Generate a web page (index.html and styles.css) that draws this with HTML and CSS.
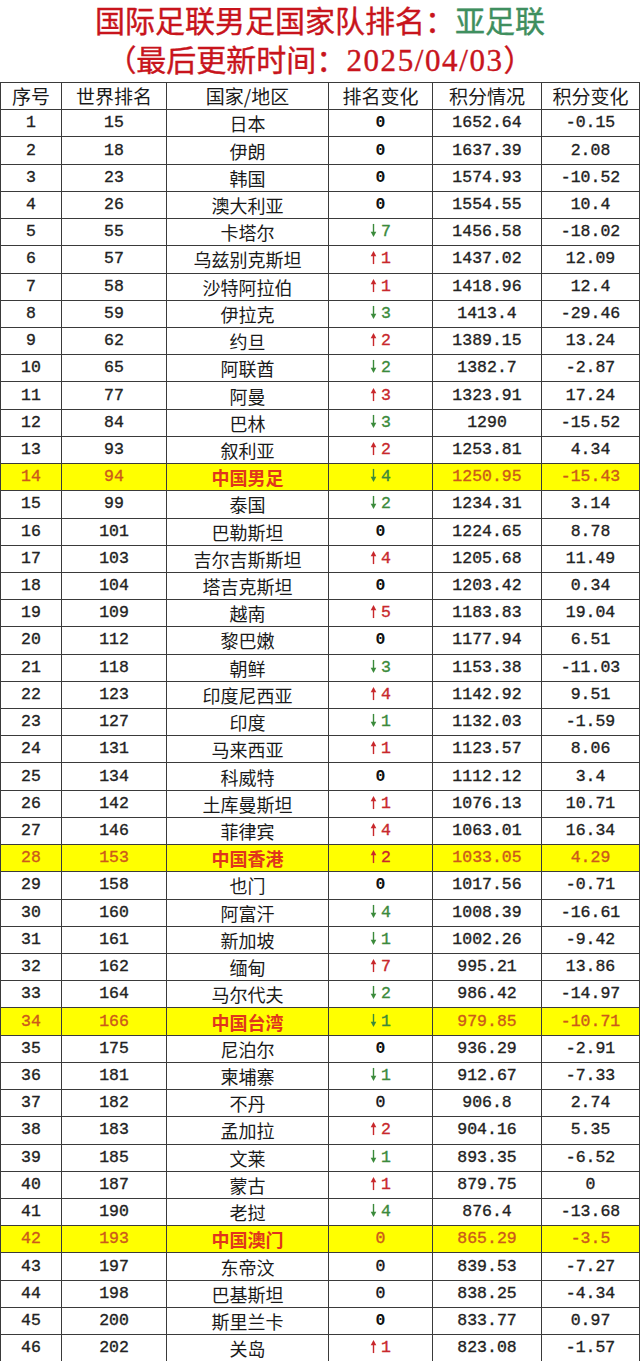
FILE: index.html
```html
<!DOCTYPE html>
<html lang="zh-CN">
<head>
<meta charset="utf-8">
<title>国际足联男足国家队排名：亚足联</title>
<link rel="stylesheet" href="styles.css">
</head>
<body>
<header class="title">
  <div class="title-line1"><span class="red">国际足联男足国家队排名：</span><span class="green">亚足联</span></div>
  <div class="title-line2">（最后更新时间：<span class="date">2025/04/03</span>）</div>
</header>
<svg width="0" height="0" class="defs" aria-hidden="true">
  <defs>
    <symbol id="up" viewBox="0 0 8 16"><path d="M4 15.5V5" stroke="currentColor" stroke-width="1.6" fill="none"/><path d="M4 0.5L0.8 6.5H7.2Z" fill="currentColor"/></symbol>
    <symbol id="down" viewBox="0 0 8 16"><path d="M4 0.5V11" stroke="currentColor" stroke-width="1.6" fill="none"/><path d="M4 15.5L0.8 9.5H7.2Z" fill="currentColor"/></symbol>
  </defs>
</svg>
<table class="rank">
  <colgroup>
    <col class="c1"><col class="c2"><col class="c3"><col class="c4"><col class="c5"><col class="c6">
  </colgroup>
  <thead>
    <tr><th>序号</th><th>世界排名</th><th>国家/地区</th><th>排名变化</th><th>积分情况</th><th>积分变化</th></tr>
  </thead>
  <tbody>
    <tr><td>1</td><td>15</td><td class="cn">日本</td><td class="zero">0</td><td>1652.64</td><td>-0.15</td></tr>
    <tr><td>2</td><td>18</td><td class="cn">伊朗</td><td class="zero">0</td><td>1637.39</td><td>2.08</td></tr>
    <tr><td>3</td><td>23</td><td class="cn">韩国</td><td class="zero">0</td><td>1574.93</td><td>-10.52</td></tr>
    <tr><td>4</td><td>26</td><td class="cn">澳大利亚</td><td class="zero">0</td><td>1554.55</td><td>10.4</td></tr>
    <tr><td>5</td><td>55</td><td class="cn">卡塔尔</td><td class="dn"><svg class="arr"><use href="#down"/></svg>7</td><td>1456.58</td><td>-18.02</td></tr>
    <tr><td>6</td><td>57</td><td class="cn">乌兹别克斯坦</td><td class="up"><svg class="arr"><use href="#up"/></svg>1</td><td>1437.02</td><td>12.09</td></tr>
    <tr><td>7</td><td>58</td><td class="cn">沙特阿拉伯</td><td class="up"><svg class="arr"><use href="#up"/></svg>1</td><td>1418.96</td><td>12.4</td></tr>
    <tr><td>8</td><td>59</td><td class="cn">伊拉克</td><td class="dn"><svg class="arr"><use href="#down"/></svg>3</td><td>1413.4</td><td>-29.46</td></tr>
    <tr><td>9</td><td>62</td><td class="cn">约旦</td><td class="up"><svg class="arr"><use href="#up"/></svg>2</td><td>1389.15</td><td>13.24</td></tr>
    <tr><td>10</td><td>65</td><td class="cn">阿联酋</td><td class="dn"><svg class="arr"><use href="#down"/></svg>2</td><td>1382.7</td><td>-2.87</td></tr>
    <tr><td>11</td><td>77</td><td class="cn">阿曼</td><td class="up"><svg class="arr"><use href="#up"/></svg>3</td><td>1323.91</td><td>17.24</td></tr>
    <tr><td>12</td><td>84</td><td class="cn">巴林</td><td class="dn"><svg class="arr"><use href="#down"/></svg>3</td><td>1290</td><td>-15.52</td></tr>
    <tr><td>13</td><td>93</td><td class="cn">叙利亚</td><td class="up"><svg class="arr"><use href="#up"/></svg>2</td><td>1253.81</td><td>4.34</td></tr>
    <tr class="hl"><td>14</td><td>94</td><td class="cn">中国男足</td><td class="dn"><svg class="arr"><use href="#down"/></svg>4</td><td>1250.95</td><td>-15.43</td></tr>
    <tr><td>15</td><td>99</td><td class="cn">泰国</td><td class="dn"><svg class="arr"><use href="#down"/></svg>2</td><td>1234.31</td><td>3.14</td></tr>
    <tr><td>16</td><td>101</td><td class="cn">巴勒斯坦</td><td class="zero">0</td><td>1224.65</td><td>8.78</td></tr>
    <tr><td>17</td><td>103</td><td class="cn">吉尔吉斯斯坦</td><td class="up"><svg class="arr"><use href="#up"/></svg>4</td><td>1205.68</td><td>11.49</td></tr>
    <tr><td>18</td><td>104</td><td class="cn">塔吉克斯坦</td><td class="zero">0</td><td>1203.42</td><td>0.34</td></tr>
    <tr><td>19</td><td>109</td><td class="cn">越南</td><td class="up"><svg class="arr"><use href="#up"/></svg>5</td><td>1183.83</td><td>19.04</td></tr>
    <tr><td>20</td><td>112</td><td class="cn">黎巴嫩</td><td class="zero">0</td><td>1177.94</td><td>6.51</td></tr>
    <tr><td>21</td><td>118</td><td class="cn">朝鲜</td><td class="dn"><svg class="arr"><use href="#down"/></svg>3</td><td>1153.38</td><td>-11.03</td></tr>
    <tr><td>22</td><td>123</td><td class="cn">印度尼西亚</td><td class="up"><svg class="arr"><use href="#up"/></svg>4</td><td>1142.92</td><td>9.51</td></tr>
    <tr><td>23</td><td>127</td><td class="cn">印度</td><td class="dn"><svg class="arr"><use href="#down"/></svg>1</td><td>1132.03</td><td>-1.59</td></tr>
    <tr><td>24</td><td>131</td><td class="cn">马来西亚</td><td class="up"><svg class="arr"><use href="#up"/></svg>1</td><td>1123.57</td><td>8.06</td></tr>
    <tr><td>25</td><td>134</td><td class="cn">科威特</td><td class="zero">0</td><td>1112.12</td><td>3.4</td></tr>
    <tr><td>26</td><td>142</td><td class="cn">土库曼斯坦</td><td class="up"><svg class="arr"><use href="#up"/></svg>1</td><td>1076.13</td><td>10.71</td></tr>
    <tr><td>27</td><td>146</td><td class="cn">菲律宾</td><td class="up"><svg class="arr"><use href="#up"/></svg>4</td><td>1063.01</td><td>16.34</td></tr>
    <tr class="hl"><td>28</td><td>153</td><td class="cn">中国香港</td><td class="up"><svg class="arr"><use href="#up"/></svg>2</td><td>1033.05</td><td>4.29</td></tr>
    <tr><td>29</td><td>158</td><td class="cn">也门</td><td class="zero">0</td><td>1017.56</td><td>-0.71</td></tr>
    <tr><td>30</td><td>160</td><td class="cn">阿富汗</td><td class="dn"><svg class="arr"><use href="#down"/></svg>4</td><td>1008.39</td><td>-16.61</td></tr>
    <tr><td>31</td><td>161</td><td class="cn">新加坡</td><td class="dn"><svg class="arr"><use href="#down"/></svg>1</td><td>1002.26</td><td>-9.42</td></tr>
    <tr><td>32</td><td>162</td><td class="cn">缅甸</td><td class="up"><svg class="arr"><use href="#up"/></svg>7</td><td>995.21</td><td>13.86</td></tr>
    <tr><td>33</td><td>164</td><td class="cn">马尔代夫</td><td class="dn"><svg class="arr"><use href="#down"/></svg>2</td><td>986.42</td><td>-14.97</td></tr>
    <tr class="hl"><td>34</td><td>166</td><td class="cn">中国台湾</td><td class="dn"><svg class="arr"><use href="#down"/></svg>1</td><td>979.85</td><td>-10.71</td></tr>
    <tr><td>35</td><td>175</td><td class="cn">尼泊尔</td><td class="zero">0</td><td>936.29</td><td>-2.91</td></tr>
    <tr><td>36</td><td>181</td><td class="cn">柬埔寨</td><td class="dn"><svg class="arr"><use href="#down"/></svg>1</td><td>912.67</td><td>-7.33</td></tr>
    <tr><td>37</td><td>182</td><td class="cn">不丹</td><td class="zero thin">0</td><td>906.8</td><td>2.74</td></tr>
    <tr><td>38</td><td>183</td><td class="cn">孟加拉</td><td class="up"><svg class="arr"><use href="#up"/></svg>2</td><td>904.16</td><td>5.35</td></tr>
    <tr><td>39</td><td>185</td><td class="cn">文莱</td><td class="dn"><svg class="arr"><use href="#down"/></svg>1</td><td>893.35</td><td>-6.52</td></tr>
    <tr><td>40</td><td>187</td><td class="cn">蒙古</td><td class="up"><svg class="arr"><use href="#up"/></svg>1</td><td>879.75</td><td>0</td></tr>
    <tr><td>41</td><td>190</td><td class="cn">老挝</td><td class="dn"><svg class="arr"><use href="#down"/></svg>4</td><td>876.4</td><td>-13.68</td></tr>
    <tr class="hl"><td>42</td><td>193</td><td class="cn">中国澳门</td><td class="zero thin">0</td><td>865.29</td><td>-3.5</td></tr>
    <tr><td>43</td><td>197</td><td class="cn">东帝汶</td><td class="zero thin">0</td><td>839.53</td><td>-7.27</td></tr>
    <tr><td>44</td><td>198</td><td class="cn">巴基斯坦</td><td class="zero thin">0</td><td>838.25</td><td>-4.34</td></tr>
    <tr><td>45</td><td>200</td><td class="cn">斯里兰卡</td><td class="zero">0</td><td>833.77</td><td>0.97</td></tr>
    <tr><td>46</td><td>202</td><td class="cn">关岛</td><td class="up"><svg class="arr"><use href="#up"/></svg>1</td><td>823.08</td><td>-1.57</td></tr>
  </tbody>
</table>
</body>
</html>
```

FILE: styles.css
```css
html, body {
  margin: 0;
  padding: 0;
  background: #ffffff;
}

body {
  width: 640px;
  font-family: "Liberation Mono", "Noto Sans CJK SC", monospace;
  color: #222222;
}

.defs {
  position: absolute;
  width: 0;
  height: 0;
  overflow: hidden;
}

.title {
  height: 82px;
  text-align: center;
  font-family: "Liberation Serif", "Noto Sans CJK SC", serif;
  color: #c8141c;
  -webkit-text-stroke: 0.4px currentColor;
}

.title-line1 {
  height: 42px;
  line-height: 44px;
  font-size: 30px;
}

.title-line1 .green {
  color: #3f8f5f;
}

.title-line2 {
  height: 40px;
  line-height: 38px;
  font-size: 30px;
}

.title-line2 .date {
  font-size: 31px;
  letter-spacing: 1.6px;
}

.rank {
  width: 639px;
  table-layout: fixed;
  border-collapse: collapse;
  border: 1px solid #2a2a2a;
}

.c1 { width: 61px; }
.c2 { width: 105px; }
.c3 { width: 162px; }
.c4 { width: 104px; }
.c5 { width: 109px; }
.c6 { width: 98px; }

.rank tr {
  height: 27.22px;
}

.rank th,
.rank td {
  border: 1px solid #3a3a3a;
  padding: 0;
  text-align: center;
  vertical-align: middle;
  white-space: nowrap;
  line-height: 20px;
}

.rank th {
  font-family: "Noto Sans CJK SC", sans-serif;
  font-weight: 400;
  font-size: 19px;
  color: #1a1a1a;
}

.rank td {
  font-size: 16.5px;
  -webkit-text-stroke: 0.35px currentColor;
}

.rank td.cn {
  font-family: "Noto Sans CJK SC", sans-serif;
  font-size: 18px;
  color: #1a1a1a;
  -webkit-text-stroke: 0;
}

.rank td.zero {
  font-weight: 700;
  color: #111111;
  -webkit-text-stroke: 0;
}

.rank td.zero.thin {
  font-weight: 400;
  -webkit-text-stroke: 0.35px currentColor;
}

.rank td.up {
  color: #c8282c;
}

.rank td.dn {
  color: #3b8a3b;
}

.arr {
  width: 7px;
  height: 15px;
  margin-right: 4px;
  vertical-align: -2px;
}

.rank tr.hl td {
  background: #ffff00;
  color: #cc5a1a;
}

.rank tr.hl td.cn {
  color: #e0361c;
  font-weight: 700;
}

.rank tr.hl td.dn {
  color: #3b8a3b;
}

.rank tr.hl td.up {
  color: #c8282c;
}
```
